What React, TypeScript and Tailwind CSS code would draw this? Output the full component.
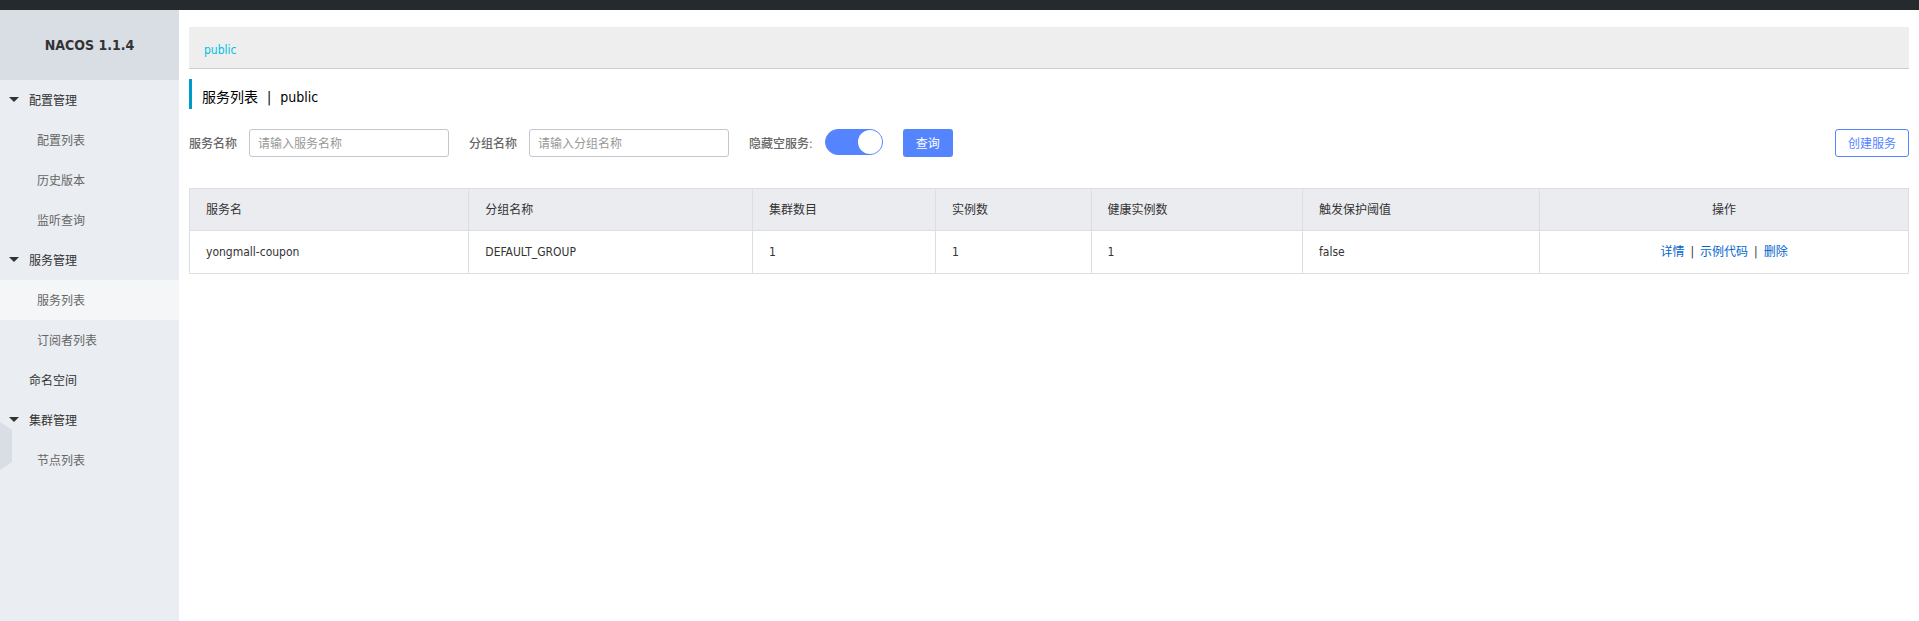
import { useState } from 'react';

type NavGroup = { label: string; children: string[] };

const NAV: NavGroup[] = [
  { label: '配置管理', children: ['配置列表', '历史版本', '监听查询'] },
  { label: '服务管理', children: ['服务列表', '订阅者列表'] },
  { label: '命名空间', children: [] },
  { label: '集群管理', children: ['节点列表'] },
];

const COLUMNS = [
  { title: '服务名', width: 'w-[16.25%]' },
  { title: '分组名称', width: 'w-[16.5%]' },
  { title: '集群数目', width: 'w-[10.65%]' },
  { title: '实例数', width: 'w-[9.05%]' },
  { title: '健康实例数', width: 'w-[12.3%]' },
  { title: '触发保护阈值', width: 'w-[13.8%]' },
];

const SERVICES = [['yongmall-coupon', 'DEFAULT_GROUP', '1', '1', '1', 'false']];

const ACTIONS = ['详情', '示例代码', '删除'];

function Sidebar({ active }: { active: string }) {
  return (
    <aside className="relative w-[179px] shrink-0 bg-[#eaedf1]">
      <h1 className="flex h-[70px] items-center justify-center bg-[#d9dde4] text-sm font-bold text-[#333]">
        NACOS 1.1.4
      </h1>
      <nav>
        <ul>
          {NAV.map((group) => (
            <li key={group.label}>
              <a href="#" className="flex h-10 items-center pl-[9px] text-[#333]">
                <span className="w-5">
                  {group.children.length > 0 && (
                    <svg width="10" height="8" viewBox="0 0 10 8" fill="#333" aria-hidden="true" className="block">
                      <path d="M0 1h10L5 6z" />
                    </svg>
                  )}
                </span>
                <span className="pt-0.5">{group.label}</span>
              </a>
              {group.children.length > 0 && (
                <ul>
                  {group.children.map((item) => (
                    <li key={item}>
                      <a
                        href="#"
                        className={
                          item === active
                            ? 'flex h-10 items-center bg-[#f4f6f8] pt-0.5 pl-[37px] text-[#666]'
                            : 'flex h-10 items-center pt-0.5 pl-[37px] text-[#666]'
                        }
                      >
                        {item}
                      </a>
                    </li>
                  ))}
                </ul>
              )}
            </li>
          ))}
        </ul>
      </nav>
      <button type="button" aria-label="收起" className="absolute top-[412px] left-0">
        <svg width="12" height="48" viewBox="0 0 12 48" fill="#d9dde4" className="block">
          <path d="M0 0L12 8V40L0 48z" />
        </svg>
      </button>
    </aside>
  );
}

function SearchField({ id, label, placeholder }: { id: string; label: string; placeholder: string }) {
  return (
    <div className="flex items-center gap-3">
      <label htmlFor={id} className="pt-0.5 font-medium text-[#666]">
        {label}
      </label>
      <input
        id={id}
        type="text"
        placeholder={placeholder}
        className="h-7 w-[200px] rounded-[3px] border border-[#c4c6cf] bg-white px-2 pt-0.5 text-[#333] outline-none placeholder:text-[#999]"
      />
    </div>
  );
}

export default function App() {
  const [hideEmpty, setHideEmpty] = useState(true);

  return (
    <div className="flex min-h-screen flex-col bg-white font-['DejaVu_Sans_Condensed','Noto_Sans_CJK_SC',sans-serif] text-xs text-[#333]">
      <header className="h-[10px] bg-[#252a2f]" />
      <div className="flex grow">
        <Sidebar active="服务列表" />
        <main className="min-w-0 grow px-[10px] pt-[17px]">
          <div className="flex h-[42px] items-center border-b border-[#ccc] bg-[#eee] pt-1 pl-[15px]">
            <a href="#" className="text-[#00c1de]">
              public
            </a>
          </div>
          <h2 className="mt-[10px] flex h-[30px] items-center border-l-3 border-[#09c] pt-1.5 pl-[10px] text-sm text-black">
            <span>服务列表</span>
            <span className="px-[9px]">|</span>
            <span>public</span>
          </h2>
          <form className="mt-5 flex items-center gap-5" onSubmit={(e) => e.preventDefault()}>
            <SearchField id="service-name" label="服务名称" placeholder="请输入服务名称" />
            <SearchField id="group-name" label="分组名称" placeholder="请输入分组名称" />
            <div className="flex items-start gap-3 self-start">
              <label htmlFor="hide-empty" className="pt-[7px] font-medium text-[#666]">
                隐藏空服务:
              </label>
              <input
                id="hide-empty"
                type="checkbox"
                role="switch"
                checked={hideEmpty}
                onChange={(e) => setHideEmpty(e.target.checked)}
                className="flex h-[26px] w-[58px] appearance-none rounded-full border border-[#ccc] bg-[#ccc] before:size-6 before:rounded-full before:bg-white checked:justify-end checked:border-[#5584ff] checked:bg-[#5584ff]"
              />
            </div>
            <button type="submit" className="h-7 rounded-[3px] bg-[#5584ff] px-[13px] pt-0.5 text-white">
              查询
            </button>
            <button
              type="button"
              className="ml-auto h-7 rounded-[3px] border border-[#5584ff] bg-white px-3 pt-0.5 text-[#5584ff]"
            >
              创建服务
            </button>
          </form>
          <table className="mt-[31px] w-full table-fixed border-collapse border border-[#dcdee3] text-left">
            <thead>
              <tr className="h-[42px] bg-[#ebecf0]">
                {COLUMNS.map((column) => (
                  <th
                    key={column.title}
                    className={`${column.width} border border-[#dcdee3] px-4 font-normal`}
                  >
                    {column.title}
                  </th>
                ))}
                <th className="border border-[#dcdee3] px-4 text-center font-normal">操作</th>
              </tr>
            </thead>
            <tbody>
              {SERVICES.map((row) => (
                <tr key={row[0]} className="h-[43px]">
                  {row.map((cell, i) => (
                    <td key={COLUMNS[i].title} className="border border-[#dcdee3] px-4">
                      {cell}
                    </td>
                  ))}
                  <td className="border border-[#dcdee3] px-4">
                    <div className="flex justify-center">
                      {ACTIONS.map((action, i) => (
                        <span key={action}>
                          {i > 0 && <span className="px-[6px]">|</span>}
                          <a href="#" className="text-[#06c]">
                            {action}
                          </a>
                        </span>
                      ))}
                    </div>
                  </td>
                </tr>
              ))}
            </tbody>
          </table>
        </main>
      </div>
    </div>
  );
}
